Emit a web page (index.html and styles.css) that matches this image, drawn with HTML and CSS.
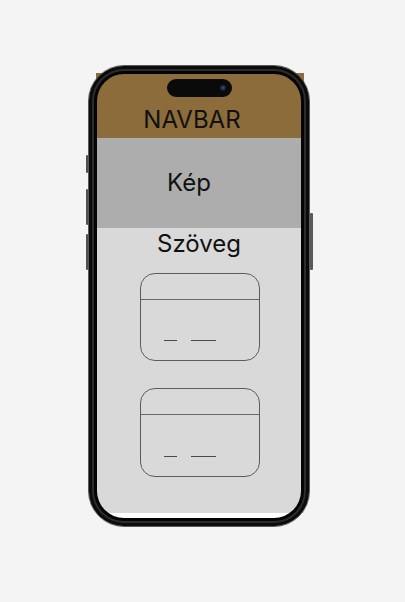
FILE: index.html
```html
<!DOCTYPE html>
<html lang="hu">
<head>
<meta charset="utf-8">
<title>Mockup</title>
<link rel="stylesheet" href="styles.css">
</head>
<body>
<div class="phone">
  <span class="side-btn action"></span>
  <span class="side-btn vol-up"></span>
  <span class="side-btn vol-down"></span>
  <span class="side-btn power"></span>
  <div class="screen">
    <header class="navbar">NAVBAR</header>
    <section class="hero">Kép</section>
    <main class="content">
      <h2 class="title">Szöveg</h2>
      <div class="card">
        <div class="card-head"></div>
        <div class="card-body"><span class="dash short"></span><span class="dash long"></span></div>
      </div>
      <div class="card card-second">
        <div class="card-head"></div>
        <div class="card-body"><span class="dash short"></span><span class="dash long"></span></div>
      </div>
    </main>
  </div>
  <div class="frame"></div>
  <div class="island"><span class="camera"></span></div>
</div>
</body>
</html>
```
FILE: styles.css
```css
* { box-sizing: border-box; }
html, body {
  margin: 0;
  padding: 0;
  background: #f4f4f4;
  height: 602px;
  overflow: hidden;
  font-family: Inter, "Liberation Sans", sans-serif;
}
.phone {
  position: relative;
  width: 222px;
  height: 462px;
  margin: 65px 0 0 88px;
  padding: 8px;
  border-radius: 36px;
  background: #ffffff;
}
.screen {
  width: 208px;
  height: 440px;
  display: flex;
  flex-direction: column;
}
.navbar {
  height: 65px;
  padding: 33px 16px 0 0;
  background: #8b6c3a;
  color: #111;
  font-size: 24px;
  line-height: 28px;
  text-align: center;
}
.hero {
  height: 90px;
  padding: 31px 22px 0 0;
  background: #adadad;
  color: #111;
  font-size: 24px;
  line-height: 28px;
  text-align: center;
}
.content {
  flex: 1;
  background: #d9d9d9;
  padding-top: 2px;
  display: flex;
  flex-direction: column;
  align-items: center;
}
.title {
  margin: 0;
  padding-right: 2px;
  font-size: 24px;
  font-weight: 400;
  line-height: 28px;
  color: #111;
}
.card {
  width: 120px;
  height: 88px;
  margin-top: 15px;
  border: 1px solid #5c5c5c;
  border-radius: 15px;
  display: flex;
  flex-direction: column;
}
.card-second {
  margin-top: 27px;
  height: 89px;
}
.card-head {
  height: 26px;
  border-bottom: 1px solid #6a6a6a;
}
.card-body {
  display: flex;
  gap: 14px;
  padding: 40px 0 0 23px;
}
.card-second .card-body { padding-top: 41px; }
.dash {
  height: 1px;
  background: #4a4a4a;
}
.dash.short { width: 13px; }
.dash.long { width: 25px; }
.frame {
  position: absolute;
  inset: 0;
  border-radius: 36px;
  border: 1px solid #5a5a5a;
  box-shadow:
    inset 0 0 0 3px #0b0b0b,
    inset 0 0 0 5px #2c2c2c,
    inset 0 0 0 8px #040404;
  pointer-events: none;
}
.island {
  position: absolute;
  left: 79px;
  top: 14px;
  width: 65px;
  height: 18px;
  border-radius: 9px;
  background: #0a0a0a;
}
.camera {
  position: absolute;
  right: 6px;
  top: 6px;
  width: 6px;
  height: 6px;
  border-radius: 50%;
  background: radial-gradient(circle at 50% 45%, #3a4a7a 0, #1a2040 60%, #0d0f1c 100%);
}
.side-btn {
  position: absolute;
  width: 2px;
  background: #505050;
  border-radius: 1px;
}
.action { left: -2px; top: 90px; height: 18px; }
.vol-up { left: -2px; top: 124px; height: 36px; }
.vol-down { left: -2px; top: 169px; height: 36px; }
.power { right: -3px; width: 3px; top: 148px; height: 57px; background: #5a5a5a; }
```
